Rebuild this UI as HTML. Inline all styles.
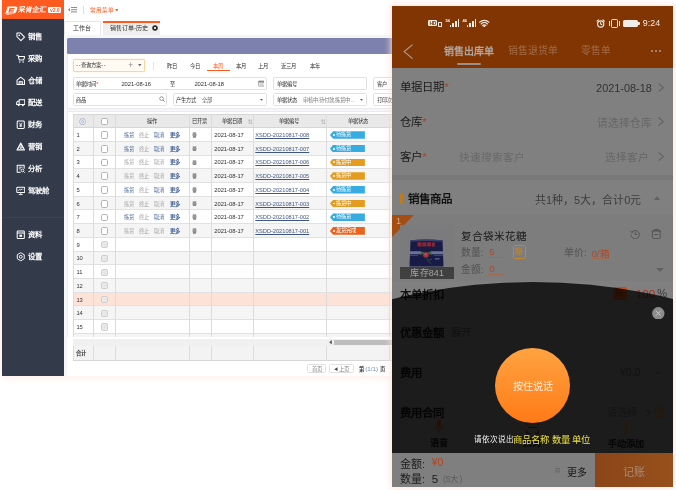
<!DOCTYPE html><html lang="zh-CN"><head><meta charset="utf-8"><title>UI</title><style>
*{margin:0;padding:0;box-sizing:border-box}
html,body{width:676px;height:490px;overflow:hidden;background:#fff;font-family:"Liberation Sans",sans-serif;}
.a{position:absolute;white-space:nowrap}
#desk{will-change:transform;position:absolute;left:2px;top:0;width:391px;height:375.5px;background:#f6f6f8;overflow:hidden;box-shadow:0 0 8px rgba(255,120,85,.2)}
#side{position:absolute;left:0;top:0;width:62px;height:100%;background:#333a49}
#logo{position:absolute;left:0;top:0;width:62px;height:19px;background:#ff5a1f}
.mi{position:absolute;left:26px;color:#fff;font-size:7.400px;font-weight:600;line-height:10px;white-space:nowrap}
.ic{position:absolute;left:13.5px;width:9.5px;height:9.5px}
#topbar{position:absolute;left:62px;top:0;width:360px;height:20.8px;background:#fff}
#tabs{position:absolute;left:62px;top:20.8px;width:360px;height:14.2px;background:#fff}
.t{position:absolute;white-space:nowrap;font-size:5.3px;color:#2e2e2e;line-height:8px;font-weight:500}
.n{font-size:5.8px}
.lnk{color:#4c6a9c}
.dis{color:#a9a9a9}
.box{position:absolute;background:#fff;border:.7px solid #e0e0e0;border-radius:1.5px}
.vl{position:absolute;width:.7px;background:#dcdcdc}
.cb{position:absolute;width:7.600px;height:7.600px;border:.8px solid #b4b4b4;border-radius:1.700px;background:#fff}
.tag{position:absolute;height:7.6px;width:35px;color:#fff;font-size:5.300px;line-height:7.600px;font-weight:500;padding-left:6px;clip-path:polygon(0 50%,3.2px 0,100% 0,100% 100%,3.2px 100%)}
.tag i{position:absolute;left:3px;top:2.9px;width:1.8px;height:1.8px;border-radius:50%;background:#fff}
#phone{will-change:transform;position:absolute;left:392px;top:6px;width:281px;height:481px;background:#808080;overflow:hidden}
#pshadow{position:absolute;left:392px;top:6px;width:281px;height:481px;box-shadow:0 0 7px 1px rgba(252,226,219,.95)}
#ph{position:absolute;left:0;top:0;width:281px;height:62px;background:#803503}
.p{position:absolute;white-space:nowrap;font-size:11.4px;line-height:14px;color:#1a1a1a}
.m{font-weight:500}
.b{font-weight:bold}
</style></head><body>
<div id="desk">
<div class="a" style="left:65.4px;top:38.2px;width:340px;height:15.400px;background:#7c81ad;border-radius:1.500px"></div>
<div class="a" style="left:65.4px;top:53.500px;width:340px;height:55.300px;background:#fff;border:.6px solid #ebebee;border-top:0"></div>
<div class="a" style="left:65.4px;top:111.400px;width:340px;height:270px;background:#fff;border:.6px solid #ebebee"></div>
<div class="box" style="left:71.3px;top:58.9px;width:71.3px;height:12.9px;border-color:#f3d7a0;background:#fffbf3;box-shadow:0 0 1.5px rgba(240,190,100,.6)"></div>
<div class="t " style="left:74.3px;top:61.4px;font-size:5.400px"><span style="letter-spacing:.7px">--</span>查询方案<span style="letter-spacing:.7px">--</span></div>
<div class="t " style="left:126.2px;top:61px;font-size:8.500px;color:#888">+</div>
<svg class="a" style="left:136.3px;top:64.4px" width="3.6" height="2.2" viewBox="0 0 10 6"><path d="M0 0h10L5 6z" fill="#666"/></svg>
<div class="vl" style="left:150.6px;top:61.5px;height:8.5px;background:#e4e4e4"></div>
<div class="t " style="left:164.6px;top:62.2px;">昨日</div>
<div class="t " style="left:187.6px;top:62.2px;">今日</div>
<div class="t " style="left:233.5px;top:62.2px;">本月</div>
<div class="t " style="left:256px;top:62.2px;">上月</div>
<div class="t " style="left:279px;top:62.2px;">近三月</div>
<div class="t " style="left:307.5px;top:62.2px;">本年</div>
<div class="t " style="left:210.5px;top:62.2px;color:#ff5a1f">本周</div>
<div class="a" style="left:204.6px;top:70px;width:23px;height:1.1px;background:#ff5a1f"></div>
<div class="box" style="left:71.3px;top:77px;width:193.5px;height:12.9px"></div>
<div class="box" style="left:271.1px;top:77px;width:93.8px;height:12.9px"></div>
<div class="box" style="left:371.1px;top:77px;width:46.9px;height:12.9px"></div>
<div class="t " style="left:74.3px;top:79.6px;">单据时间<span style="color:#f33">*</span></div>
<div class="t n" style="left:119.4px;top:79.6px;">2021-08-16</div>
<div class="t " style="left:167.9px;top:79.6px;">至</div>
<div class="t n" style="left:192.4px;top:79.6px;">2021-08-18</div>
<svg class="a" style="left:255.9px;top:80px" width="6.6" height="6.6" viewBox="0 0 12 12"><rect x=".8" y="1.8" width="10.4" height="9.4" rx="1" fill="none" stroke="#888" stroke-width="1.2"/><rect x=".8" y="1.8" width="10.4" height="3" fill="#888"/><path d="M3 7h6M3 9h6" stroke="#999" stroke-width="1"/></svg>
<div class="t " style="left:274.5px;top:79.6px;">单据编号</div>
<div class="t " style="left:375px;top:79.6px;">客户</div>
<div class="box" style="left:71.3px;top:93px;width:93.6px;height:12.7px"></div>
<div class="box" style="left:171.4px;top:93px;width:93.4px;height:12.7px"></div>
<div class="box" style="left:271.1px;top:93px;width:93.8px;height:12.7px"></div>
<div class="box" style="left:371.1px;top:93px;width:46.9px;height:12.7px"></div>
<div class="t " style="left:74.3px;top:95.5px;">商品</div>
<svg class="a" style="left:157.2px;top:96.300px" width="6.200" height="6.200" viewBox="0 0 12 12"><circle cx="5" cy="5" r="3.600" fill="none" stroke="#7c7c7c" stroke-width="1.500"/><path d="M7.800 7.800L11 11" stroke="#7c7c7c" stroke-width="1.700"/></svg>
<div class="t " style="left:174.3px;top:95.5px;">产生方式</div>
<div class="t " style="left:199.8px;top:95.5px;color:#555">全部</div>
<svg class="a" style="left:257.8px;top:98.8px" width="3" height="1.8" viewBox="0 0 10 6"><path d="M0 0h10L5 6z" fill="#555"/></svg>
<div class="t " style="left:274.5px;top:95.5px;">单据状态</div>
<div class="t " style="left:300.5px;top:95.5px;color:#777">审核中,待付款,拣货中...</div>
<svg class="a" style="left:357.8px;top:98.8px" width="3" height="1.8" viewBox="0 0 10 6"><path d="M0 0h10L5 6z" fill="#555"/></svg>
<div class="t " style="left:375px;top:95.5px;">打印次数</div>
<div class="a" style="left:71.4px;top:114.2px;width:340px;height:14px;background:#e9e9e9;border-top:.7px solid #d6d6d6;border-bottom:.7px solid #d6d6d6"></div>
<div class="a" style="left:71.4px;top:128.2px;width:340px;height:13.71px;background:#fff;border-bottom:.7px solid #e1e1e1"></div>
<div class="a" style="left:71.4px;top:141.91px;width:340px;height:13.71px;background:#f5f5f5;border-bottom:.7px solid #e1e1e1"></div>
<div class="a" style="left:71.4px;top:155.62px;width:340px;height:13.71px;background:#fff;border-bottom:.7px solid #e1e1e1"></div>
<div class="a" style="left:71.4px;top:169.33px;width:340px;height:13.71px;background:#f5f5f5;border-bottom:.7px solid #e1e1e1"></div>
<div class="a" style="left:71.4px;top:183.04px;width:340px;height:13.71px;background:#fff;border-bottom:.7px solid #e1e1e1"></div>
<div class="a" style="left:71.4px;top:196.75px;width:340px;height:13.71px;background:#f5f5f5;border-bottom:.7px solid #e1e1e1"></div>
<div class="a" style="left:71.4px;top:210.46px;width:340px;height:13.71px;background:#fff;border-bottom:.7px solid #e1e1e1"></div>
<div class="a" style="left:71.4px;top:224.17px;width:340px;height:13.71px;background:#f5f5f5;border-bottom:.7px solid #e1e1e1"></div>
<div class="a" style="left:71.4px;top:237.88px;width:340px;height:13.71px;background:#fff;border-bottom:.7px solid #e1e1e1"></div>
<div class="a" style="left:71.4px;top:251.59px;width:340px;height:13.71px;background:#f5f5f5;border-bottom:.7px solid #e1e1e1"></div>
<div class="a" style="left:71.4px;top:265.3px;width:340px;height:13.71px;background:#fff;border-bottom:.7px solid #e1e1e1"></div>
<div class="a" style="left:71.4px;top:279.01px;width:340px;height:13.71px;background:#f5f5f5;border-bottom:.7px solid #e1e1e1"></div>
<div class="a" style="left:71.4px;top:292.72px;width:340px;height:13.71px;background:#fde2d7;border-bottom:.7px solid #e1e1e1"></div>
<div class="a" style="left:71.4px;top:306.43px;width:340px;height:13.71px;background:#f5f5f5;border-bottom:.7px solid #e1e1e1"></div>
<div class="a" style="left:71.4px;top:320.14px;width:340px;height:13.71px;background:#fff;border-bottom:.7px solid #e1e1e1"></div>
<div class="a" style="left:71.4px;top:333.85px;width:340px;height:13.71px;background:#f5f5f5;border-bottom:.7px solid #e1e1e1"></div>
<div class="a" style="left:65.4px;top:337px;width:340px;height:50px;background:#fff"></div>
<div class="a" style="left:71.4px;top:338.5px;width:340px;height:7.6px;background:#f0f0f0"></div>
<div class="a" style="left:331.8px;top:339.5px;width:80px;height:5.2px;background:#bdbdbd"></div>
<svg class="a" style="left:326.8px;top:340.200px" width="3" height="4.400" viewBox="0 0 6 10"><path d="M6 0v10L0 5z" fill="#555"/></svg>
<div class="a" style="left:71.4px;top:346.1px;width:340px;height:14.6px;background:#f3f3f3;border-bottom:.7px solid #d6d6d6"></div>
<div class="t " style="left:74.4px;top:349.4px;font-weight:bold">合计</div>
<div class="vl" style="left:71.4px;top:114.2px;height:222.8px"></div>
<div class="vl" style="left:71.4px;top:346.1px;height:14.6px"></div>
<div class="vl" style="left:90.6px;top:114.2px;height:222.8px"></div>
<div class="vl" style="left:90.6px;top:346.1px;height:14.6px"></div>
<div class="vl" style="left:113.4px;top:114.2px;height:222.8px"></div>
<div class="vl" style="left:113.4px;top:346.1px;height:14.6px"></div>
<div class="vl" style="left:187.3px;top:114.2px;height:222.8px"></div>
<div class="vl" style="left:187.3px;top:346.1px;height:14.6px"></div>
<div class="vl" style="left:209.2px;top:114.2px;height:222.8px"></div>
<div class="vl" style="left:209.2px;top:346.1px;height:14.6px"></div>
<div class="vl" style="left:250.7px;top:114.2px;height:222.8px"></div>
<div class="vl" style="left:250.7px;top:346.1px;height:14.6px"></div>
<div class="vl" style="left:323.7px;top:114.2px;height:222.8px"></div>
<div class="vl" style="left:323.7px;top:346.1px;height:14.6px"></div>
<div class="vl" style="left:386.6px;top:114.2px;height:222.8px"></div>
<div class="vl" style="left:386.6px;top:346.1px;height:14.6px"></div>
<svg class="a" style="left:77.3px;top:117.80000000000001px" width="7.2" height="7.2" viewBox="0 0 12 12"><path d="M3.2 1.2h5.6L11.6 6 8.8 10.8H3.2L.4 6z" fill="none" stroke="#8da0c8" stroke-width=".9"/><circle cx="6" cy="6" r="1.7" fill="none" stroke="#8da0c8" stroke-width=".9"/></svg>
<div class="cb" style="left:98.5px;top:117.7px"></div>
<div class="t " style="left:145px;top:117.4px;">操作</div>
<div class="t " style="left:189.8px;top:117.4px;">已开票</div>
<div class="t " style="left:219.6px;top:117.4px;">单据日期</div>
<div class="t " style="left:276.6px;top:117.4px;">单据编号</div>
<div class="t " style="left:345.6px;top:117.4px;">单据状态</div>
<svg class="a" style="left:245.5px;top:118.60000000000001px" width="4.6" height="5.6" viewBox="0 0 9 11"><path d="M2.5 10V1.5M.8 3.2L2.5 1.3 4.2 3.2M6.5 1v8.5M4.8 7.8L6.5 9.7 8.2 7.8" fill="none" stroke="#999" stroke-width="1"/></svg>
<svg class="a" style="left:318.6px;top:118.60000000000001px" width="4.6" height="5.6" viewBox="0 0 9 11"><path d="M2.5 10V1.5M.8 3.2L2.5 1.3 4.2 3.2M6.5 1v8.5M4.8 7.8L6.5 9.7 8.2 7.8" fill="none" stroke="#999" stroke-width="1"/></svg>
<div class="t n" style="left:74.4px;top:131.05px;font-size:5.800px;color:#333">1</div>
<div class="cb" style="left:98.5px;top:131.35px"></div>
<div class="t lnk" style="left:122.3px;top:131.05px;">拣货</div>
<div class="t dis" style="left:137.2px;top:131.05px;">终止</div>
<div class="t lnk" style="left:152.3px;top:131.05px;">取消</div>
<div class="t " style="left:167.5px;top:131.05px;font-weight:bold;color:#3b5c94">更多</div>
<svg class="a" style="left:190.1px;top:132.15px" width="5" height="5.6" viewBox="0 0 10 11"><path d="M1.500 1h7v2.200h-7z" fill="#606060"/><path d="M1 4.800h8M1 6.800h8" stroke="#606060" stroke-width="1.300"/><path d="M2.500 8.400h5v2.200h-5z" fill="#888" stroke="#606060" stroke-width="1"/></svg>
<div class="t n" style="left:212.2px;top:131.05px;">2021-08-17</div>
<div class="t n" style="left:253.3px;top:131.05px;color:#405682;text-decoration:underline;text-decoration-thickness:.55px;text-underline-offset:.8px;font-size:5.650px">XSDD-20210817-008</div>
<div class="tag" style="left:327.9px;top:131.15px;background:#38ace0"><i></i>待拣货</div>
<div class="t n" style="left:74.4px;top:144.76px;font-size:5.800px;color:#333">2</div>
<div class="cb" style="left:98.5px;top:145.06px"></div>
<div class="t lnk" style="left:122.3px;top:144.76px;">拣货</div>
<div class="t dis" style="left:137.2px;top:144.76px;">终止</div>
<div class="t lnk" style="left:152.3px;top:144.76px;">取消</div>
<div class="t " style="left:167.5px;top:144.76px;font-weight:bold;color:#3b5c94">更多</div>
<svg class="a" style="left:190.1px;top:145.86px" width="5" height="5.6" viewBox="0 0 10 11"><path d="M1.500 1h7v2.200h-7z" fill="#606060"/><path d="M1 4.800h8M1 6.800h8" stroke="#606060" stroke-width="1.300"/><path d="M2.500 8.400h5v2.200h-5z" fill="#888" stroke="#606060" stroke-width="1"/></svg>
<div class="t n" style="left:212.2px;top:144.76px;">2021-08-17</div>
<div class="t n" style="left:253.3px;top:144.76px;color:#405682;text-decoration:underline;text-decoration-thickness:.55px;text-underline-offset:.8px;font-size:5.650px">XSDD-20210817-007</div>
<div class="tag" style="left:327.9px;top:144.86px;background:#38ace0"><i></i>待拣货</div>
<div class="t n" style="left:74.4px;top:158.47px;font-size:5.800px;color:#333">3</div>
<div class="cb" style="left:98.5px;top:158.78px"></div>
<div class="t dis" style="left:122.3px;top:158.47px;">拣货</div>
<div class="t dis" style="left:137.2px;top:158.47px;">终止</div>
<div class="t dis" style="left:152.3px;top:158.47px;">取消</div>
<div class="t " style="left:167.5px;top:158.47px;font-weight:bold;color:#3b5c94">更多</div>
<svg class="a" style="left:190.1px;top:159.57px" width="5" height="5.6" viewBox="0 0 10 11"><path d="M1.500 1h7v2.200h-7z" fill="#606060"/><path d="M1 4.800h8M1 6.800h8" stroke="#606060" stroke-width="1.300"/><path d="M2.500 8.400h5v2.200h-5z" fill="#888" stroke="#606060" stroke-width="1"/></svg>
<div class="t n" style="left:212.2px;top:158.47px;">2021-08-17</div>
<div class="t n" style="left:253.3px;top:158.47px;color:#405682;text-decoration:underline;text-decoration-thickness:.55px;text-underline-offset:.8px;font-size:5.650px">XSDD-20210817-006</div>
<div class="tag" style="left:327.9px;top:158.57px;background:#e39c1f"><i></i>拣货中</div>
<div class="t n" style="left:74.4px;top:172.18px;font-size:5.800px;color:#333">4</div>
<div class="cb" style="left:98.5px;top:172.48px"></div>
<div class="t dis" style="left:122.3px;top:172.18px;">拣货</div>
<div class="t dis" style="left:137.2px;top:172.18px;">终止</div>
<div class="t dis" style="left:152.3px;top:172.18px;">取消</div>
<div class="t " style="left:167.5px;top:172.18px;font-weight:bold;color:#3b5c94">更多</div>
<svg class="a" style="left:190.1px;top:173.28px" width="5" height="5.6" viewBox="0 0 10 11"><path d="M1.500 1h7v2.200h-7z" fill="#606060"/><path d="M1 4.800h8M1 6.800h8" stroke="#606060" stroke-width="1.300"/><path d="M2.500 8.400h5v2.200h-5z" fill="#888" stroke="#606060" stroke-width="1"/></svg>
<div class="t n" style="left:212.2px;top:172.18px;">2021-08-17</div>
<div class="t n" style="left:253.3px;top:172.18px;color:#405682;text-decoration:underline;text-decoration-thickness:.55px;text-underline-offset:.8px;font-size:5.650px">XSDD-20210817-005</div>
<div class="tag" style="left:327.9px;top:172.28px;background:#e39c1f"><i></i>拣货中</div>
<div class="t n" style="left:74.4px;top:185.89px;font-size:5.800px;color:#333">5</div>
<div class="cb" style="left:98.5px;top:186.19px"></div>
<div class="t lnk" style="left:122.3px;top:185.89px;">拣货</div>
<div class="t dis" style="left:137.2px;top:185.89px;">终止</div>
<div class="t lnk" style="left:152.3px;top:185.89px;">取消</div>
<div class="t " style="left:167.5px;top:185.89px;font-weight:bold;color:#3b5c94">更多</div>
<svg class="a" style="left:190.1px;top:186.99px" width="5" height="5.6" viewBox="0 0 10 11"><path d="M1.500 1h7v2.200h-7z" fill="#606060"/><path d="M1 4.800h8M1 6.800h8" stroke="#606060" stroke-width="1.300"/><path d="M2.500 8.400h5v2.200h-5z" fill="#888" stroke="#606060" stroke-width="1"/></svg>
<div class="t n" style="left:212.2px;top:185.89px;">2021-08-17</div>
<div class="t n" style="left:253.3px;top:185.89px;color:#405682;text-decoration:underline;text-decoration-thickness:.55px;text-underline-offset:.8px;font-size:5.650px">XSDD-20210817-004</div>
<div class="tag" style="left:327.9px;top:185.99px;background:#38ace0"><i></i>待拣货</div>
<div class="t n" style="left:74.4px;top:199.6px;font-size:5.800px;color:#333">6</div>
<div class="cb" style="left:98.5px;top:199.91px"></div>
<div class="t dis" style="left:122.3px;top:199.6px;">拣货</div>
<div class="t dis" style="left:137.2px;top:199.6px;">终止</div>
<div class="t dis" style="left:152.3px;top:199.6px;">取消</div>
<div class="t " style="left:167.5px;top:199.6px;font-weight:bold;color:#3b5c94">更多</div>
<svg class="a" style="left:190.1px;top:200.7px" width="5" height="5.6" viewBox="0 0 10 11"><path d="M1.500 1h7v2.200h-7z" fill="#606060"/><path d="M1 4.800h8M1 6.800h8" stroke="#606060" stroke-width="1.300"/><path d="M2.500 8.400h5v2.200h-5z" fill="#888" stroke="#606060" stroke-width="1"/></svg>
<div class="t n" style="left:212.2px;top:199.6px;">2021-08-17</div>
<div class="t n" style="left:253.3px;top:199.6px;color:#405682;text-decoration:underline;text-decoration-thickness:.55px;text-underline-offset:.8px;font-size:5.650px">XSDD-20210817-003</div>
<div class="tag" style="left:327.9px;top:199.7px;background:#e39c1f"><i></i>拣货中</div>
<div class="t n" style="left:74.4px;top:213.31px;font-size:5.800px;color:#333">7</div>
<div class="cb" style="left:98.5px;top:213.61px"></div>
<div class="t lnk" style="left:122.3px;top:213.31px;">拣货</div>
<div class="t dis" style="left:137.2px;top:213.31px;">终止</div>
<div class="t lnk" style="left:152.3px;top:213.31px;">取消</div>
<div class="t " style="left:167.5px;top:213.31px;font-weight:bold;color:#3b5c94">更多</div>
<svg class="a" style="left:190.1px;top:214.41px" width="5" height="5.6" viewBox="0 0 10 11"><path d="M1.500 1h7v2.200h-7z" fill="#606060"/><path d="M1 4.800h8M1 6.800h8" stroke="#606060" stroke-width="1.300"/><path d="M2.500 8.400h5v2.200h-5z" fill="#888" stroke="#606060" stroke-width="1"/></svg>
<div class="t n" style="left:212.2px;top:213.31px;">2021-08-17</div>
<div class="t n" style="left:253.3px;top:213.31px;color:#405682;text-decoration:underline;text-decoration-thickness:.55px;text-underline-offset:.8px;font-size:5.650px">XSDD-20210817-002</div>
<div class="tag" style="left:327.9px;top:213.41px;background:#38ace0"><i></i>待拣货</div>
<div class="t n" style="left:74.4px;top:227.02px;font-size:5.800px;color:#333">8</div>
<div class="cb" style="left:98.5px;top:227.32px"></div>
<div class="t dis" style="left:122.3px;top:227.02px;">拣货</div>
<div class="t dis" style="left:137.2px;top:227.02px;">终止</div>
<div class="t dis" style="left:152.3px;top:227.02px;">取消</div>
<div class="t " style="left:167.5px;top:227.02px;font-weight:bold;color:#3b5c94">更多</div>
<svg class="a" style="left:190.1px;top:228.12px" width="5" height="5.6" viewBox="0 0 10 11"><path d="M1.500 1h7v2.200h-7z" fill="#606060"/><path d="M1 4.800h8M1 6.800h8" stroke="#606060" stroke-width="1.300"/><path d="M2.500 8.400h5v2.200h-5z" fill="#888" stroke="#606060" stroke-width="1"/></svg>
<div class="t n" style="left:212.2px;top:227.02px;">2021-08-17</div>
<div class="t n" style="left:253.3px;top:227.02px;color:#405682;text-decoration:underline;text-decoration-thickness:.55px;text-underline-offset:.8px;font-size:5.650px">XSDD-20210817-001</div>
<div class="tag" style="left:327.9px;top:227.12px;background:#e8641c"><i></i>发货完成</div>
<div class="t n" style="left:74.4px;top:240.73px;font-size:5.800px;color:#333">9</div>
<div class="cb" style="left:98.6px;top:241.13px;width:7.200px;height:7.200px;background:#e3e3e3;border-color:#cdcdcd;box-shadow:inset 0 0 0 1.200px #ececec"></div>
<div class="t n" style="left:74.4px;top:254.44px;font-size:5.800px;color:#333">10</div>
<div class="cb" style="left:98.6px;top:254.84px;width:7.200px;height:7.200px;background:#e3e3e3;border-color:#cdcdcd;box-shadow:inset 0 0 0 1.200px #ececec"></div>
<div class="t n" style="left:74.4px;top:268.16px;font-size:5.800px;color:#333">11</div>
<div class="cb" style="left:98.6px;top:268.56px;width:7.200px;height:7.200px;background:#e3e3e3;border-color:#cdcdcd;box-shadow:inset 0 0 0 1.200px #ececec"></div>
<div class="t n" style="left:74.4px;top:281.87px;font-size:5.800px;color:#333">12</div>
<div class="cb" style="left:98.6px;top:282.26px;width:7.200px;height:7.200px;background:#e3e3e3;border-color:#cdcdcd;box-shadow:inset 0 0 0 1.200px #ececec"></div>
<div class="t n" style="left:74.4px;top:295.58px;font-size:5.800px;color:#333">13</div>
<div class="cb" style="left:98.6px;top:295.98px;width:7.200px;height:7.200px;background:#e3e3e3;border-color:#cdcdcd;box-shadow:inset 0 0 0 1.200px #ececec"></div>
<div class="t n" style="left:74.4px;top:309.29px;font-size:5.800px;color:#333">14</div>
<div class="cb" style="left:98.6px;top:309.69px;width:7.200px;height:7.200px;background:#e3e3e3;border-color:#cdcdcd;box-shadow:inset 0 0 0 1.200px #ececec"></div>
<div class="t n" style="left:74.4px;top:323.0px;font-size:5.800px;color:#333">15</div>
<div class="cb" style="left:98.6px;top:323.39px;width:7.200px;height:7.200px;background:#e3e3e3;border-color:#cdcdcd;box-shadow:inset 0 0 0 1.200px #ececec"></div>
<div class="box t" style="left:304.9px;top:363.500px;width:19.30000000000001px;height:9.600px;line-height:8.400px;text-align:center;color:#808080">首页</div>
<div class="box t" style="left:327px;top:363.500px;width:24.5px;height:9.600px;line-height:8.400px;text-align:center;color:#808080"><span style="color:#444;font-size:4px">◀</span> 上页</div>
<div class="t " style="left:356.8px;top:364.8px;color:#444"><b>第</b> <span style="color:#6f8fb8;font-size:6.200px;font-weight:400">(1/1)</span> <b>页</b></div>
<div id="side"><div id="logo">
<svg class="a" style="left:1.600px;top:4.600px" width="14.300" height="11" viewBox="0 0 26 20"><path d="M8 2.5h13.5c2.2 0 3.3 1.4 2.7 3.4l-1.8 6c-.6 2-2.4 3.4-4.6 3.4H6.5c-2.2 0-3.2-1.4-2.6-3.4l1.700-6C6.2 3.900 5.800 2.500 8 2.500z" fill="#fff"/><path d="M10.200 5.400h9.200l-.5 1.800h-6.600l-.4 1.400h6.300l-.5 1.700h-6.300l-.5 1.500h6.800l-.5 1.800H7.800z" fill="#ff5a1f"/><path d="M1 13.500c1.500 4 8 5.500 15 4.200-6 .3-11-.8-13-3.700z" fill="#fff"/></svg>
<div class="a" style="left:16.200px;top:4.700px;color:#fff;font-size:7px;line-height:10px;font-weight:900;transform:skewX(-9deg);letter-spacing:0">采肯企汇</div>
<div class="a" style="left:46.2px;top:6.6px;width:13.2px;height:6.4px;background:#fff;border-radius:1.2px;color:#ff5a1f;font-size:5px;line-height:6.4px;text-align:center;font-weight:bold">v2.0</div>
</div>
<svg class="ic" style="top:32.0px" viewBox="0 0 12 12"><path d="M1.2 1.400h4.600l5 5-4.600 4.600-5-5z" fill="none" stroke="#fff" stroke-width="1.300" stroke-linejoin="round"/><circle cx="4.100" cy="4.300" r="1" fill="#fff"/></svg>
<div class="mi" style="top:31.8px">销售</div>
<svg class="ic" style="top:54.0px" viewBox="0 0 12 12"><path d="M.5 1.500h2l1.600 6h5.600l1.300-4.300H3.300" fill="none" stroke="#fff" stroke-width="1.300" stroke-linejoin="round"/><circle cx="4.800" cy="10" r="1" fill="#fff"/><circle cx="9" cy="10" r="1" fill="#fff"/></svg>
<div class="mi" style="top:53.8px">采购</div>
<svg class="ic" style="top:76.0px" viewBox="0 0 12 12"><path d="M1.300 5.200L6 1.500l4.700 3.700v5.500H1.300z" fill="none" stroke="#fff" stroke-width="1.300" stroke-linejoin="round"/><path d="M3.800 10.500V7h4.400v3.500M3.800 8.800h4.400" fill="none" stroke="#fff" stroke-width="1.100"/></svg>
<div class="mi" style="top:75.8px">仓储</div>
<svg class="ic" style="top:98.0px" viewBox="0 0 12 12"><path d="M4 2.200h7v6H4zM4 4H1.800L.8 6v2.200H4" fill="none" stroke="#fff" stroke-width="1.300" stroke-linejoin="round"/><circle cx="3.400" cy="9.300" r="1.200" fill="#fff"/><circle cx="8.600" cy="9.300" r="1.200" fill="#fff"/></svg>
<div class="mi" style="top:97.8px">配送</div>
<svg class="ic" style="top:120.0px" viewBox="0 0 12 12"><rect x="1.500" y="1.300" width="9" height="9.400" rx="1.200" fill="none" stroke="#fff" stroke-width="1.300"/><path d="M4.200 3.500L6 5.800l1.800-2.300M6 5.800v3M4.300 6.300h3.400M4.300 7.700h3.400" fill="none" stroke="#fff" stroke-width="1"/></svg>
<div class="mi" style="top:119.8px">财务</div>
<svg class="ic" style="top:142.0px" viewBox="0 0 12 12"><path d="M6 1.300L10.800 10H1.200z" fill="none" stroke="#fff" stroke-width="1.300" stroke-linejoin="round"/><circle cx="4.300" cy="8" r="1.500" fill="none" stroke="#fff" stroke-width="1"/><circle cx="7.700" cy="8" r="1.500" fill="none" stroke="#fff" stroke-width="1"/><circle cx="6" cy="5" r="1.300" fill="none" stroke="#fff" stroke-width="1"/></svg>
<div class="mi" style="top:141.8px">营销</div>
<svg class="ic" style="top:164.0px" viewBox="0 0 12 12"><path d="M10.300 6V1.500H1.500v9H6" fill="none" stroke="#fff" stroke-width="1.300" stroke-linejoin="round"/><path d="M3.500 4h4.800M3.500 6.200h2.500" stroke="#fff" stroke-width="1.100"/><circle cx="8.200" cy="8.200" r="1.700" fill="none" stroke="#fff" stroke-width="1.100"/><path d="M9.500 9.500l1.500 1.500" stroke="#fff" stroke-width="1.200"/></svg>
<div class="mi" style="top:163.8px">分析</div>
<svg class="ic" style="top:186.0px" viewBox="0 0 12 12"><rect x="1" y="1.500" width="10" height="6.800" rx="1" fill="none" stroke="#fff" stroke-width="1.300"/><path d="M3 6l1.600-2 1.600 1.300L8 3.500l1 1M6 8.500v2M3.500 10.800h5" fill="none" stroke="#fff" stroke-width="1.100"/></svg>
<div class="mi" style="top:185.8px">驾驶舱</div>
<svg class="ic" style="top:230.2px" viewBox="0 0 12 12"><rect x="1.500" y="1.300" width="9" height="9.400" rx="1" fill="none" stroke="#fff" stroke-width="1.300"/><path d="M1.500 3.800h9" stroke="#fff" stroke-width="1.300"/><rect x="4.300" y="5.800" width="3.400" height="2.800" fill="#fff"/></svg>
<div class="mi" style="top:230px">资料</div>
<svg class="ic" style="top:252.2px" viewBox="0 0 12 12"><path d="M6 .9l4.400 2.550v5.100L6 11.100 1.600 8.550v-5.100z" fill="none" stroke="#fff" stroke-width="1.200" stroke-linejoin="round"/><circle cx="6" cy="6" r="1.800" fill="none" stroke="#fff" stroke-width="1.200"/></svg>
<div class="mi" style="top:252px">设置</div>
<div class="a" style="left:0;top:216.700px;width:62px;height:.7px;background:#3b4252"></div>
</div>
<div id="topbar">
<div class="a" style="left:6.500px;top:7.400px;width:6.500px;height:.9px;background:#8a8a8a;box-shadow:0 2.200px 0 #8a8a8a,0 4.400px 0 #8a8a8a"></div>
<svg class="a" style="left:3.600px;top:8px" width="2" height="3.400" viewBox="0 0 6 10"><path d="M6 0v10L0 5z" fill="#ff5a1f"/></svg>
<div class="vl" style="left:19.400px;top:6px;height:7.500px;background:#ddd"></div>
<div class="t" style="left:25.600px;top:5.700px;color:#ff5a1f;font-size:5.600px">常用菜单</div>
<svg class="a" style="left:50.700px;top:8.800px" width="3.800" height="2.400" viewBox="0 0 10 6"><path d="M0 0h10L5 6z" fill="#ff5a1f"/></svg>
</div>
<div id="tabs">
<div class="a" style="left:0;top:0;width:36.700px;height:14.200px;border:.7px solid #e6e6e6;border-bottom:0;background:#fff"></div>
<div class="t" style="left:9.300px;top:3.600px;font-size:5.900px">工作台</div>
<div class="a" style="left:38.600px;top:.3px;width:57.400px;height:13.900px;background:#efefef;border-top:2px solid #ff5a1f"></div>
<div class="t" style="left:46px;top:3.600px;font-size:6px">销售订单-历史</div>
<svg class="a" style="left:87.600px;top:4.600px" width="6" height="6" viewBox="0 0 12 12"><circle cx="6" cy="6" r="5.500" fill="#222"/><path d="M3.800 3.800l4.400 4.400M8.200 3.800L3.800 8.200" stroke="#fff" stroke-width="1.700"/></svg>
</div>
</div>
<div id="pshadow"></div><div id="phone">
<div class="a" style="left:0;top:168.5px;width:281px;height:5.8px;background:#797979"></div>
<div class="a" style="left:0;top:209px;width:281px;height:65.5px;background:#7d7d7d"></div>
<div id="ph">
<div class="a" style="left:36.2px;top:13.8px;width:9px;height:6.6px;background:#f4ece6;border-radius:1.2px;color:#803503;font-size:5px;line-height:6.6px;font-weight:bold;text-align:center;letter-spacing:-.3px">HD</div>
<div class="a" style="left:46px;top:16px;width:3.6px;height:4.6px;border:.9px solid #f4ece6;border-radius:.8px"></div>
<div class="a" style="left:53.4px;top:12.2px;font-size:4.2px;line-height:5px;color:#f4ece6;font-weight:bold">56</div>
<div class="a" style="left:57.6px;top:18.8px;width:1.7px;height:2.2px;background:#f4ece6"></div>
<div class="a" style="left:60.3px;top:16.9px;width:1.7px;height:4.1px;background:#f4ece6"></div>
<div class="a" style="left:63.0px;top:15.0px;width:1.7px;height:6.0px;background:#f4ece6"></div>
<div class="a" style="left:65.7px;top:13.1px;width:1.7px;height:7.9px;background:#f4ece6"></div>
<div class="a" style="left:70.4px;top:12.2px;font-size:4.2px;line-height:5px;color:#f4ece6;font-weight:bold">46</div>
<div class="a" style="left:74.6px;top:18.8px;width:1.7px;height:2.2px;background:#f4ece6"></div>
<div class="a" style="left:77.3px;top:16.9px;width:1.7px;height:4.1px;background:#f4ece6"></div>
<div class="a" style="left:80.0px;top:15.0px;width:1.7px;height:6.0px;background:#f4ece6"></div>
<div class="a" style="left:82.7px;top:13.1px;width:1.7px;height:7.9px;background:#f4ece6"></div>
<svg class="a" style="left:87px;top:12.6px" width="10.6" height="8.6" viewBox="0 0 21 17"><path d="M1.5 6.200a13 13 0 0 1 18 0M4.500 9.700a8.500 8.500 0 0 1 12 0M7.500 13a4.300 4.300 0 0 1 6 0" fill="none" stroke="#f4ece6" stroke-width="2.600" stroke-linecap="round"/><circle cx="10.500" cy="15.200" r="1.700" fill="#f4ece6"/></svg>
<svg class="a" style="left:204.3px;top:12.6px" width="9.4" height="9" viewBox="0 0 19 18"><circle cx="9.500" cy="10" r="6.300" fill="none" stroke="#f4ece6" stroke-width="2.300"/><path d="M9.500 6.500V10l2.400 1.600M2 4.200L5 1.600M17 4.200L14 1.600" fill="none" stroke="#f4ece6" stroke-width="2.100" stroke-linecap="round"/></svg>
<div class="a" style="left:219.2px;top:13px;width:6.400px;height:8.500px;border:1.300px solid #f4ece6;border-radius:1.500px"></div>
<div class="a" style="left:217px;top:15px;width:1.200px;height:4.600px;background:#f4ece6"></div><div class="a" style="left:226.9px;top:15px;width:1.200px;height:4.600px;background:#f4ece6"></div>
<div class="a" style="left:231.2px;top:13.8px;width:15px;height:6.8px;background:#f4ece6;border-radius:1.6px"></div><div class="a" style="left:246.4px;top:15.6px;width:1.3px;height:3.200px;background:#f4ece6;border-radius:0 1px 1px 0"></div>
<div class="p" style="left:250.8px;top:12.32px;font-size:8.9px;line-height:11.57px;color:#f4ece6;">9:24</div>
<svg class="a" style="left:11px;top:38px" width="10.4" height="15.2" viewBox="0 0 10.400 15.200"><path d="M9.600 .6L1.200 7.600l8.400 7" fill="none" stroke="#ab9a92" stroke-width="1.200"/></svg>
<div class="p" style="left:51.8px;top:39.3px;font-size:10px;line-height:13.0px;color:#b2a59e;font-weight:bold">销售出库单</div>
<div class="a" style="left:65.2px;top:56.6px;width:23.400px;height:2.400px;border-radius:1.200px;background:#978d89"></div>
<div class="p" style="left:115.5px;top:39.36px;font-size:9.9px;line-height:12.87px;color:#a16c48;">销售退货单</div>
<div class="p" style="left:189.4px;top:39.47px;font-size:9.7px;line-height:12.61px;color:#a16c48;">零售单</div>
<div class="a" style="left:258.9px;top:44.3px;width:2px;height:2px;border-radius:50%;background:#b39c90"></div>
<div class="a" style="left:262.8px;top:44.3px;width:2px;height:2px;border-radius:50%;background:#b39c90"></div>
<div class="a" style="left:266.7px;top:44.3px;width:2px;height:2px;border-radius:50%;background:#b39c90"></div>
</div>
<div class="p" style="left:8.3px;top:74.29px;font-size:11.4px;line-height:14.82px;color:#1a1a1a;font-weight:500">单据日期<span style="color:#a8431f">*</span></div>
<div class="p" style="right:21.2px;top:74.62px;font-size:10.9px;line-height:14.17px;color:#323232;">2021-08-18</div>
<svg class="a" style="left:266px;top:76.9px" width="6" height="9.200" viewBox="0 0 6 9.200"><path d="M.6 .5l4.600 4.100L.6 8.700" fill="none" stroke="#636363" stroke-width="1.150"/></svg>
<div class="p" style="left:8.3px;top:109.39px;font-size:11.4px;line-height:14.82px;color:#1a1a1a;font-weight:500">仓库<span style="color:#a8431f">*</span></div>
<div class="p" style="right:20.6px;top:109.74px;font-size:10.8px;line-height:14.04px;color:#666;">请选择仓库</div>
<svg class="a" style="left:266px;top:111.4px" width="6" height="9.200" viewBox="0 0 6 9.200"><path d="M.6 .5l4.600 4.100L.6 8.700" fill="none" stroke="#636363" stroke-width="1.150"/></svg>
<div class="p" style="left:8.3px;top:144.19px;font-size:11.4px;line-height:14.82px;color:#1a1a1a;font-weight:500">客户<span style="color:#a8431f">*</span></div>
<div class="p" style="left:67.3px;top:144.85px;font-size:10.6px;line-height:13.78px;color:#686868;">快速搜索客户</div>
<div class="p" style="right:24.1px;top:144.79px;font-size:10.7px;line-height:13.91px;color:#666;">选择客户</div>
<svg class="a" style="left:266px;top:146.4px" width="6" height="9.200" viewBox="0 0 6 9.200"><path d="M.6 .5l4.600 4.100L.6 8.700" fill="none" stroke="#636363" stroke-width="1.150"/></svg>
<div class="a" style="left:7.9px;top:186.7px;width:2.900px;height:11.200px;background:#bf7a22;border-radius:1px"></div>
<div class="p" style="left:16.2px;top:185.73px;font-size:11.5px;line-height:14.95px;color:#151515;font-weight:bold">销售商品</div>
<div class="p" style="right:31.8px;top:186.68px;font-size:10.9px;line-height:14.17px;color:#3c3c3c;">共1种，5大，合计0元</div>
<div class="a" style="left:261.8px;top:190.3px;border:3.800px solid transparent;border-bottom:4.400px solid #626262;border-top:0"></div>
<div class="a" style="left:0;top:209px;width:0;height:0;border-top:22px solid #a64d12;border-right:22px solid transparent"></div>
<div class="p" style="left:4.2px;top:209.97px;font-size:8.5px;line-height:11.05px;color:#cdb09a;">1</div>
<div class="a" style="left:8.4px;top:219.2px;width:53.700px;height:53.600px;background:#7b7b7e"></div>
<svg class="a" style="left:17px;top:233px" width="35" height="28" viewBox="0 0 35 28"><path d="M1.500 1.200Q17 -.4 33.500 1.200L34.500 27.600H.5z" fill="#171b45"/><path d="M1.500 1.200Q17 -.4 33.500 1.200l.1 1.600Q17 1.300 1.400 2.800z" fill="#39406c"/><path d="M8.500 3.200h4v4.400h-4zM13.300 3.200h4v4.400h-4zM18.100 3.200h4v4.400h-4zM22.900 3.400h3v4h-3z" fill="#8d2632"/><path d="M1 12.300h11.500v2.900H1zM21.500 12.300H34v2.900H21.500z" fill="#7a84a6" opacity=".85"/><path d="M1 16h8v1H1zM25 16h9v1h-9z" fill="#4a5280" opacity=".7"/><ellipse cx="13" cy="14.200" rx="2.200" ry="1.200" fill="#3b6a46" transform="rotate(-25 13 14.200)"/><ellipse cx="21" cy="14.200" rx="2.200" ry="1.200" fill="#3b6a46" transform="rotate(25 21 14.200)"/><circle cx="16.900" cy="15.800" r="2.900" fill="#a2323c"/><circle cx="16.500" cy="15.300" r="1.200" fill="#b85058"/><path d="M17.300 18.600q1 3 5 6.200M19 21.500l4-1.500" stroke="#2c4c3a" stroke-width="1" fill="none"/><path d="M26 19.300h4.500v1.100H26z" fill="#8088a6" opacity=".8"/></svg>
<div class="a" style="left:8.4px;top:260.8px;width:53.700px;height:12px;background:#404040;color:#a2a2a2;font-size:9px;line-height:12.800px;text-align:center;font-weight:500;letter-spacing:.1px">库存841</div>
<div class="p" style="left:68.7px;top:224.25px;font-size:10.6px;line-height:13.78px;color:#181818;font-weight:500">复合袋米花糖</div>
<div class="p" style="left:68.7px;top:240.62px;font-size:9.8px;line-height:12.74px;color:#525252;">数量:</div>
<div class="p" style="left:97.3px;top:239.93px;font-size:9.8px;line-height:12.74px;color:#a84a2c;">5</div>
<div class="a" style="left:95.7px;top:250.5px;width:16.100px;height:.7px;background:#a06a50"></div>
<div class="a" style="left:121.1px;top:238.7px;width:12.500px;height:14.500px;border:.9px solid #c4872f;border-radius:1.500px;color:#c4872f;font-size:7.600px;line-height:12.600px;text-align:center">箱</div>
<div class="p" style="left:172px;top:241.12px;font-size:9.8px;line-height:12.74px;color:#525252;">单价:</div>
<div class="p" style="left:199.5px;top:242.63px;font-size:9.6px;line-height:12.48px;color:#a84a2c;border-bottom:.7px solid #a06a50;line-height:9.400px">0/箱</div>
<div class="p" style="left:68.7px;top:257.52px;font-size:9.8px;line-height:12.74px;color:#525252;">金额:</div>
<div class="p" style="left:97.3px;top:256.83px;font-size:9.8px;line-height:12.74px;color:#a84a2c;">0</div>
<div class="a" style="left:95.7px;top:267.7px;width:16.100px;height:.7px;background:#a06a50"></div>
<svg class="a" style="left:237.8px;top:222.6px" width="10.400" height="10.400" viewBox="0 0 20 20"><path d="M3.300 6.500A8 8 0 1 1 2 11" fill="none" stroke="#555" stroke-width="1.900"/><path d="M1.200 3.500l2 3.400 3.400-1.600" fill="none" stroke="#555" stroke-width="1.900"/><path d="M10 5.500V10.500h4" fill="none" stroke="#555" stroke-width="1.900"/></svg>
<svg class="a" style="left:259.2px;top:222px" width="10.600" height="11.400" viewBox="0 0 20 22"><path d="M2.500 5.500h15v12.500a2.500 2.500 0 0 1-2.500 2.500H5a2.500 2.500 0 0 1-2.500-2.500zM6.500 5V2.500h7V5M1 5.500h18" fill="none" stroke="#555" stroke-width="1.900"/><path d="M6.500 12.500h7" stroke="#555" stroke-width="1.900"/><circle cx="7.500" cy="12.500" r="1" fill="#616161"/><circle cx="12.500" cy="12.500" r="1" fill="#616161"/></svg>
<div class="a" style="left:263.6px;top:262px;border:4.300px solid transparent;border-top:4.800px solid #626262;border-bottom:0"></div>
<div class="p" style="left:8.3px;top:281.79px;font-size:11.4px;line-height:14.82px;color:#141414;font-weight:bold">本单折扣</div>
<div class="a" style="left:221px;top:280.8px;width:13.800px;height:13.200px;background:#c0501c;border-radius:2px;color:#7a3010;font-size:8.500px;line-height:13.200px;text-align:center">折</div>
<div class="p" style="left:243.8px;top:279.96px;font-size:11.6px;line-height:15.08px;color:#a8301c;">100</div>
<div class="p" style="left:265.3px;top:280.35px;font-size:11px;line-height:14.3px;color:#3a3a3a;">%</div>
<div class="p" style="left:8.3px;top:319.79px;font-size:11.4px;line-height:14.82px;color:#141414;font-weight:bold">优惠金额</div>
<div class="p" style="left:59px;top:320.31px;font-size:10.5px;line-height:13.65px;color:#4c4c4c;">展开</div>
<div class="p" style="left:8.3px;top:360.19px;font-size:11.4px;line-height:14.82px;color:#141414;font-weight:bold">费用</div>
<div class="p" style="left:228px;top:359.98px;font-size:10.5px;line-height:13.65px;color:#505050;">¥0.0</div>
<svg class="a" style="left:263.2px;top:364.8px" width="5.200" height="3.700" viewBox="0 0 7 5"><path d="M.6 .6l2.900 3.400L6.400 .6" fill="none" stroke="#505050" stroke-width="1"/></svg>
<div class="p" style="left:8.3px;top:399.89px;font-size:11.4px;line-height:14.82px;color:#141414;font-weight:bold">费用合同</div>
<div class="p" style="left:214.5px;top:400.31px;font-size:10.5px;line-height:13.65px;color:#5a5a5a;">请选择</div>
<svg class="a" style="left:253.5px;top:402.5px" width="5" height="8" viewBox="0 0 5 8"><path d="M.6 .6l3.400 3.400L.6 7.400" fill="none" stroke="#5a5a5a" stroke-width="1"/></svg>
<svg class="a" style="left:262px;top:400px" width="10.600" height="11.600" viewBox="0 0 20 22"><path d="M2.500 5.500h15v12.500a2.500 2.500 0 0 1-2.500 2.500H5a2.500 2.500 0 0 1-2.500-2.500zM6.500 5V2.500h7V5M1 5.500h18M6.500 12.500h7" fill="none" stroke="#c8601c" stroke-width="1.900"/></svg>
<svg class="a" style="left:41.5px;top:413px" width="10" height="15" viewBox="0 0 10 15"><rect x="3" y=".5" width="4" height="8" rx="2" fill="#b04418"/><path d="M1 6.500a4 4 0 0 0 8 0M5 10.500v3.500" fill="none" stroke="#b04418" stroke-width="1.200"/></svg>
<div class="p" style="left:37.6px;top:432.46px;font-size:9.2px;line-height:11.96px;color:#161616;font-weight:bold">语音</div>
<svg class="a" style="left:134px;top:414.5px" width="13" height="13" viewBox="0 0 13 13"><path d="M.6 4V.6H4M9 .6h3.400V4M12.400 9v3.400H9M4 12.400H.6V9M2 6.500h9" fill="none" stroke="#6a3010" stroke-width="1.100"/></svg>
<div class="p" style="left:131.2px;top:432.46px;font-size:9.2px;line-height:11.96px;color:#161616;font-weight:bold">扫码</div>
<div class="a" style="left:228.5px;top:420.6px;width:12px;height:1px;background:#c8581c"></div><div class="a" style="left:234px;top:415.1px;width:1px;height:12px;background:#c8581c"></div>
<div class="p" style="left:216px;top:432.66px;font-size:9.2px;line-height:11.96px;color:#161616;font-weight:bold">手动添加</div>
<div class="a" style="left:-448.500px;top:276px;width:1178px;height:1178px;border-radius:50%;background:rgba(0,0,0,.785)"></div>
<svg class="a" style="left:260.4px;top:300.5px" width="12.600" height="12.600" viewBox="0 0 12.600 12.600"><circle cx="6.300" cy="6.300" r="6.200" fill="#8b8b8b"/><path d="M3.800 3.800l5 5M8.800 3.800l-5 5" stroke="#c4c4c4" stroke-width="1"/></svg>
<div class="a" style="left:102.9px;top:341.5px;width:75.400px;height:75.400px;border-radius:50%;background:linear-gradient(#ffa341,#ff7a17)"></div>
<div class="p" style="left:120.6px;top:373.94px;font-size:10.1px;line-height:13.13px;color:#fff1dc;">按住说话</div>
<div class="p" style="left:82.2px;top:429.36px;font-size:7.65px;line-height:9.95px;color:#f2f2f2;">请依次说出</div>
<div class="p" style="left:121px;top:428.18px;font-size:9.35px;line-height:12.15px;color:#efe23e;">商品名称 数量 单位</div>
<div class="a" style="left:0;top:447px;width:281px;height:34px;background:#7f7f7f"></div>
<div class="a" style="left:203px;top:447px;width:78px;height:34px;background:linear-gradient(90deg,#8b4518,#97501c)"></div>
<div class="p" style="left:8px;top:450.82px;font-size:11px;line-height:14.3px;color:#202020;">金额:</div>
<div class="p" style="left:39.8px;top:450.44px;font-size:10.4px;line-height:13.52px;color:#b2431d;">¥0</div>
<div class="p" style="left:8px;top:466.32px;font-size:11px;line-height:14.3px;color:#202020;">数量:</div>
<div class="p" style="left:39.8px;top:464.96px;font-size:11.6px;line-height:15.08px;color:#1c1c1c;">5</div>
<div class="p" style="left:50.9px;top:468.27px;font-size:8.5px;line-height:11.05px;color:#5c5c5c;">(5大)</div>
<div class="a" style="left:163.4px;top:462.3px;width:4.600px;height:.8px;background:#6a6a6a;box-shadow:0 1.700px 0 #6a6a6a,0 3.400px 0 #6a6a6a"></div>
<div class="p" style="left:174.5px;top:459.8px;font-size:10px;line-height:13.0px;color:#151515;">更多</div>
<div class="p" style="left:230.8px;top:458.82px;font-size:11px;line-height:14.3px;color:#a98b78;">记账</div>
</div>
</body></html>
